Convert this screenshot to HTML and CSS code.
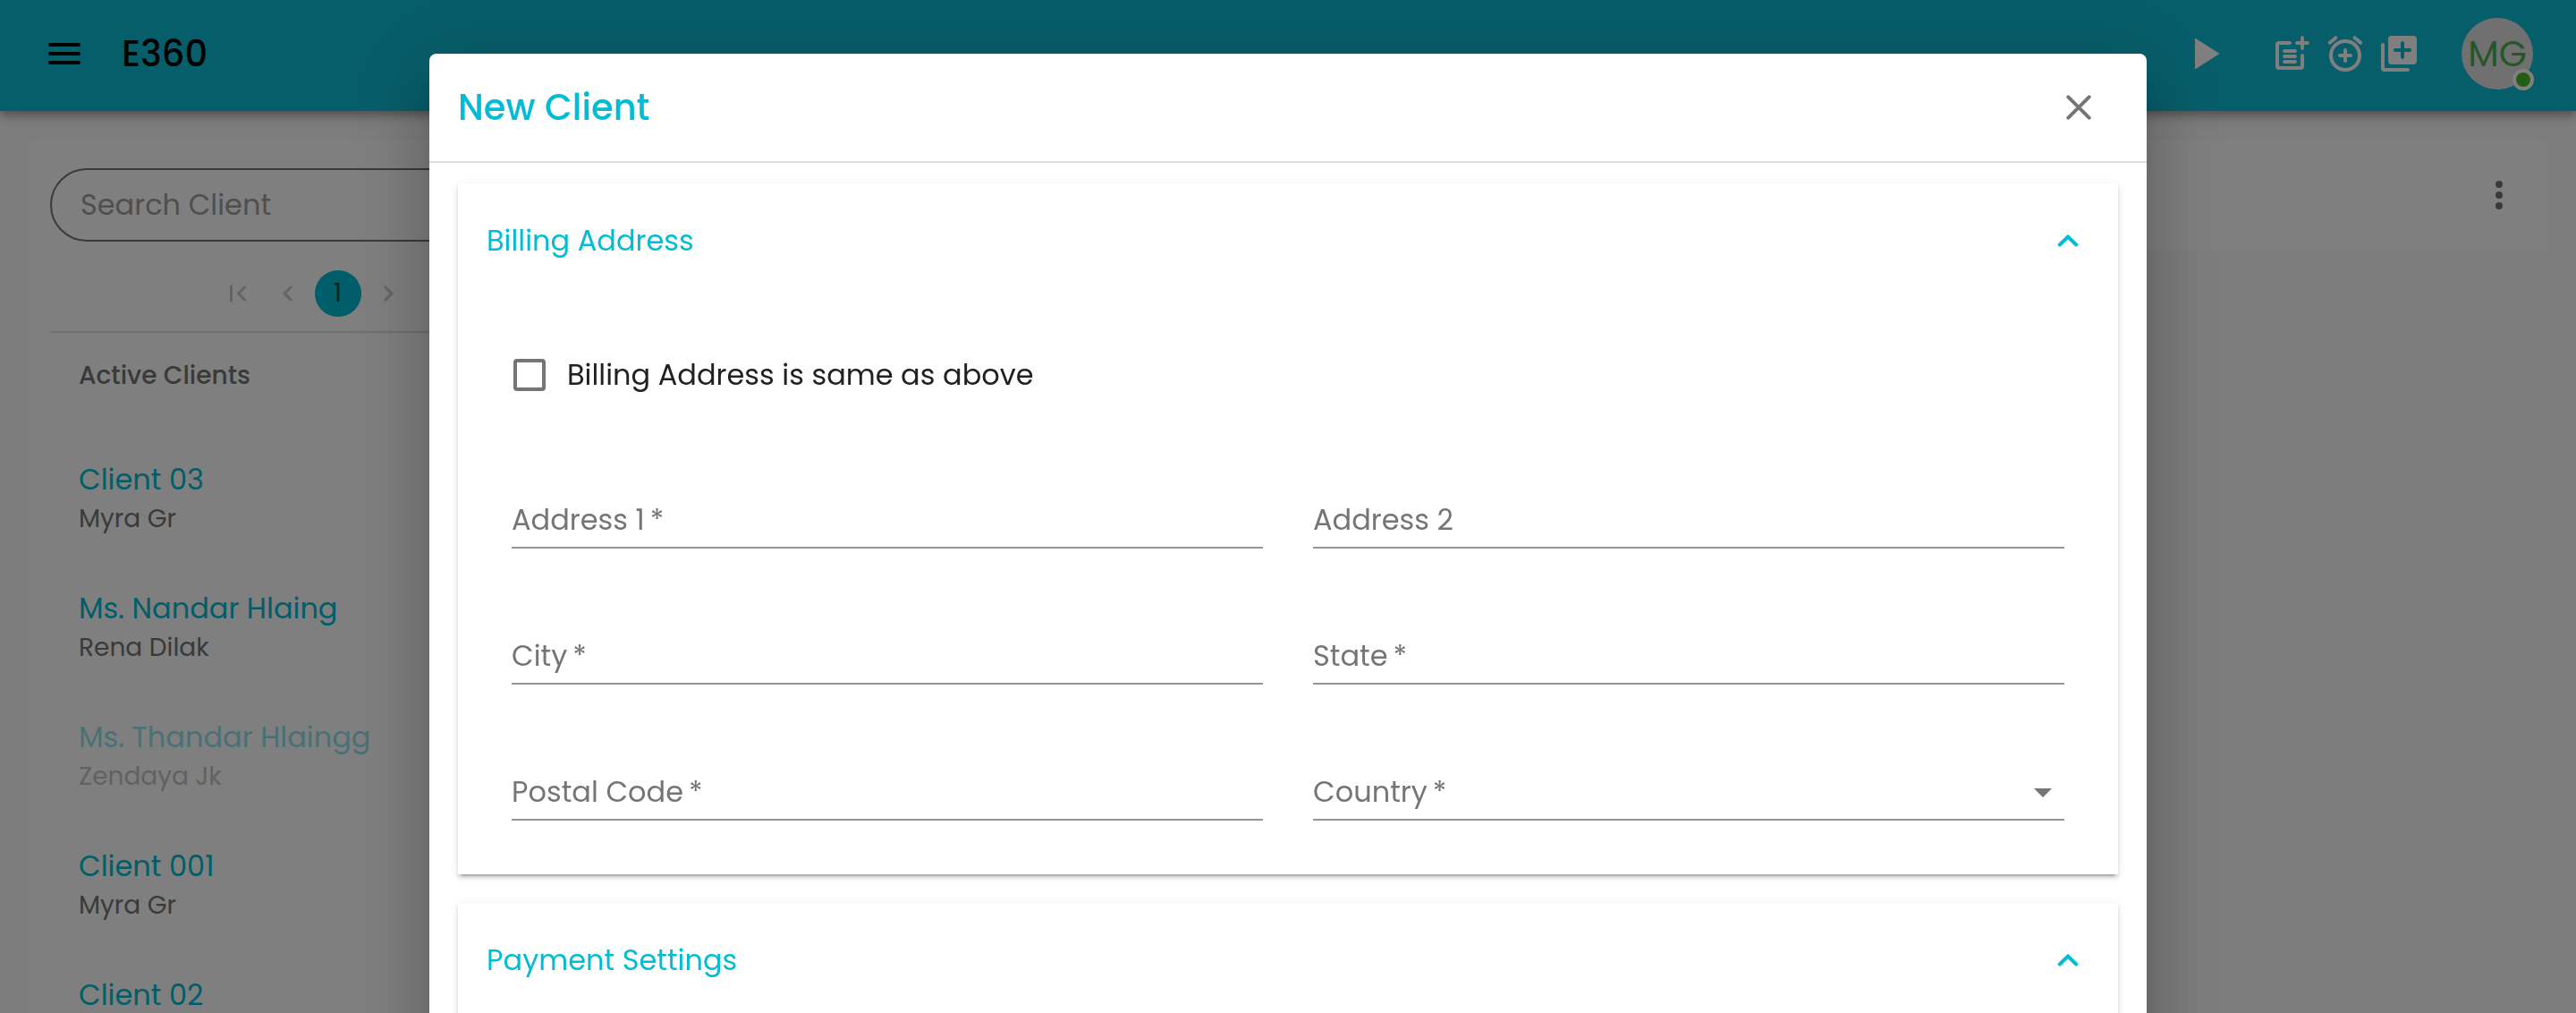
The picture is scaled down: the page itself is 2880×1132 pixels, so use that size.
FILE: index.html
```html
<!DOCTYPE html>
<html lang="en">
<head>
<meta charset="utf-8">
<title>E360 - New Client</title>
<link rel="stylesheet" href="styles.css">
</head>
<body>
<div class="app">
  <header class="topbar">
    <svg class="icon line" viewBox="0 0 24 24"><path d="M4 7h16M4 12h16M4 17h16"/></svg>
    <h1 class="brand">E360</h1>
    <nav class="actions">
      <svg class="play" viewBox="0 0 28 36"><path d="M0 0.500v35L27.500 18z"/></svg>
      <svg class="icon line" viewBox="0 0 24 24"><path d="M11 6H5a1 1 0 0 0-1 1v12a1 1 0 0 0 1 1h12a1 1 0 0 0 1-1v-6"/><path d="M18 3v6M15 6h6M8 10.500h6M8 13.500h6M8 16.500h6" stroke-width="1.900"/></svg>
      <svg class="icon line" viewBox="0 0 24 24"><circle cx="12" cy="13" r="8"/><path d="M12 10v6M9 13h6M3.400 5.900l3.300-2.800M20.600 5.900l-3.300-2.800"/></svg>
      <svg class="icon line" viewBox="0 0 24 24"><path fill="currentColor" stroke="none" fill-rule="evenodd" d="M8 2h12a2 2 0 0 1 2 2v12a2 2 0 0 1-2 2H8a2 2 0 0 1-2-2V4a2 2 0 0 1 2-2zM14 5a1 1 0 0 0-1 1v3h-3a1 1 0 0 0 0 2h3v3a1 1 0 0 0 2 0v-3h3a1 1 0 0 0 0-2h-3V6a1 1 0 0 0-1-1z"/><path d="M3 7v13a1 1 0 0 0 1 1h13"/></svg>
      <div class="avatar">MG<span class="status"></span></div>
    </nav>
  </header>
  <main class="workspace">
    <aside class="sidebar">
      <div class="search">Search Client</div>
      <div class="pager">
        <svg class="first" viewBox="6 6 12.400 12"><path d="M18.410 16.590L13.820 12l4.590-4.590L17 6l-6 6 6 6zM6 6h2v12H6z"/></svg>
        <svg class="step" viewBox="8 6 8 12"><path d="M15.410 7.410L14 6l-6 6 6 6 1.410-1.410L10.830 12z"/></svg>
        <span class="page">1</span>
        <svg class="step" viewBox="8 6 8 12"><path d="M10 6L8.590 7.410 13.170 12l-4.580 4.590L10 18l6-6z"/></svg>
      </div>
      <h2 class="list-title">Active Clients</h2>
      <ul class="clients">
        <li class="client"><span class="name">Client 03</span><span class="owner">Myra Gr</span></li>
        <li class="client"><span class="name">Ms. Nandar Hlaing</span><span class="owner">Rena Dilak</span></li>
        <li class="client inactive"><span class="name">Ms. Thandar Hlaingg</span><span class="owner">Zendaya Jk</span></li>
        <li class="client"><span class="name">Client 001</span><span class="owner">Myra Gr</span></li>
        <li class="client"><span class="name">Client 02</span></li>
      </ul>
    </aside>
    <section class="details">
      <svg class="more" viewBox="0 0 8 32"><circle cx="4" cy="4" r="4"/><circle cx="4" cy="16" r="4"/><circle cx="4" cy="28" r="4"/></svg>
    </section>
  </main>
</div>

<div class="backdrop">
  <div class="dialog">
    <div class="dialog-head">
      <h2 class="dialog-title">New Client</h2>
      <svg class="close" viewBox="0 0 28 28"><path d="M2.300 2.300l23.400 23.400M25.700 2.300L2.300 25.700"/></svg>
    </div>
    <div class="dialog-body">
      <section class="panel">
        <div class="panel-head">
          <h3>Billing Address</h3>
          <svg class="chevron" viewBox="0 0 24 14"><path d="M2.800 11.500L12 2.600l9.200 8.900"/></svg>
        </div>
        <div class="panel-body">
          <label class="check"><span class="box"></span>Billing Address is same as above</label>
          <div class="fields">
            <div class="field"><span>Address 1</span><span class="req">*</span></div>
            <div class="field"><span>Address 2</span></div>
            <div class="field"><span>City</span><span class="req">*</span></div>
            <div class="field"><span>State</span><span class="req">*</span></div>
            <div class="field"><span>Postal Code</span><span class="req">*</span></div>
            <div class="field"><span>Country</span><span class="req">*</span><svg class="arrow" viewBox="0 0 20 10"><path d="M0 0h20L10 10z"/></svg></div>
          </div>
        </div>
      </section>
      <section class="panel">
        <div class="panel-head">
          <h3>Payment Settings</h3>
          <svg class="chevron" viewBox="0 0 24 14"><path d="M2.800 11.500L12 2.600l9.200 8.900"/></svg>
        </div>
        <div class="panel-body"></div>
      </section>
    </div>
  </div>
</div>
</body>
</html>
```
FILE: styles.css
```css
* { box-sizing: border-box; }

body {
  margin: 0;
  height: 1132px;
  overflow: hidden;
  background: #fafafa;
  color: #212121;
  font-family: Poppins, Inter, sans-serif;
  font-size: 32px;
}

h1, h2, h3, ul { margin: 0; padding: 0; font-weight: 400; font-size: inherit; }
ul { list-style: none; }
svg { display: block; flex: none; fill: currentColor; }

.app { height: 1132px; overflow: hidden; }

/* Top bar */
.topbar {
  position: relative;
  display: flex;
  align-items: center;
  height: 124px;
  padding: 0 48px 4px;
  background: #0dbcd4;
  color: #000;
  box-shadow: 0 4px 8px -2px rgba(0,0,0,.2), 0 8px 10px 0 rgba(0,0,0,.14), 0 2px 20px 0 rgba(0,0,0,.12);
}
.icon { width: 48px; height: 48px; }
.line { fill: none; stroke: currentColor; stroke-width: 2; stroke-linecap: round; stroke-linejoin: round; }
.brand { margin-left: 40px; font-size: 40px; font-weight: 500; }
.actions { display: flex; align-items: center; gap: 12px; margin-left: auto; color: #fff; }
.play { width: 28px; height: 36px; margin-right: 44px; }
.avatar {
  position: relative;
  width: 80px;
  height: 80px;
  margin-left: 34px;
  border-radius: 50%;
  background: #e0e0e0;
  color: #4cae50;
  font-size: 40px;
  line-height: 80px;
  text-align: center;
}
.status {
  position: absolute;
  right: -1px;
  bottom: -1px;
  width: 24px;
  height: 24px;
  border: 4px solid #fff;
  border-radius: 50%;
  background: #46be24;
}

/* Workspace behind the dialog */
.workspace { display: flex; gap: 32px; padding: 32px; }
.sidebar { width: 640px; height: 1100px; padding: 32px 24px; border-radius: 8px; background: #fff; }
.search {
  height: 82px;
  padding-left: 32px;
  border: 2px solid #757575;
  border-radius: 41px;
  color: #9e9e9e;
  line-height: 78px;
}
.pager {
  display: flex;
  align-items: center;
  height: 102px;
  margin-bottom: 16px;
  padding: 16px 0 0 201px;
  border-bottom: 2px solid #dedede;
  color: #c8c8c8;
}
.first { width: 18.600px; height: 18px; margin-right: 40px; }
.step { width: 12px; height: 18px; }
.page {
  width: 52px;
  height: 52px;
  margin: 0 24px;
  border-radius: 50%;
  background: #00bcd4;
  color: #00454e;
  font-size: 28px;
  line-height: 52px;
  text-align: center;
}
.list-title { padding-left: 32px; color: #757575; font-size: 28px; font-weight: 500; line-height: 64px; }
.clients { padding-top: 62px; }
.client { display: flex; flex-direction: column; height: 144px; padding-left: 32px; }
.name { color: #00bcd4; line-height: 44px; }
.owner { color: #757575; font-size: 28px; line-height: 44px; }
.inactive { opacity: .43; }
.details { flex: 1; height: 124px; padding: 46px 50px 0 0; border-radius: 8px; background: #fff; color: #757575; }
.more { width: 8px; height: 32px; margin-left: auto; }

/* Dialog */
.backdrop {
  position: fixed;
  inset: 0;
  display: flex;
  justify-content: center;
  padding-top: 60px;
  overflow: hidden;
  background: rgba(0,0,0,.5);
}
.dialog {
  width: 1920px;
  height: 1200px;
  flex: none;
  border-radius: 8px;
  background: #fff;
  box-shadow: 0 22px 30px -14px rgba(0,0,0,.2), 0 48px 76px 6px rgba(0,0,0,.14), 0 18px 92px 16px rgba(0,0,0,.12);
}
.dialog-head {
  display: flex;
  align-items: center;
  justify-content: space-between;
  height: 122px;
  padding: 0 62px 0 32px;
  border-bottom: 2px solid #e0e0e0;
}
.dialog-title { color: #00bcd4; font-size: 40px; font-weight: 500; }
.close { width: 28px; height: 28px; fill: none; stroke: #757575; stroke-width: 4; stroke-linecap: round; }
.dialog-body { display: flex; flex-direction: column; gap: 32px; padding: 23px 32px; }
.panel {
  background: #fff;
  box-shadow: 0 6px 2px -4px rgba(0,0,0,.2), 0 4px 4px 0 rgba(0,0,0,.14), 0 2px 10px 0 rgba(0,0,0,.08);
}
.panel-head {
  display: flex;
  align-items: center;
  justify-content: space-between;
  height: 128px;
  padding: 0 44px 0 32px;
  color: #00bcd4;
}
.chevron { width: 24px; height: 14px; fill: none; stroke: currentColor; stroke-width: 4; stroke-linecap: round; }
.panel-body { height: 644px; padding: 64px 60px 0; }
.check { display: flex; align-items: center; gap: 24px; height: 44px; padding-left: 2px; }
.box { width: 36px; height: 36px; border: 4px solid #757575; border-radius: 4px; }
.fields { display: grid; grid-template-columns: 1fr 1fr; column-gap: 56px; grid-auto-rows: 152px; padding-top: 20px; }
.field {
  display: flex;
  align-items: flex-end;
  padding-bottom: 10px;
  border-bottom: 2px solid #949494;
  color: #757575;
  line-height: 40px;
}
.req { margin-left: 6px; }
.arrow { width: 20px; height: 10px; margin: 0 14px 14px auto; }
```
